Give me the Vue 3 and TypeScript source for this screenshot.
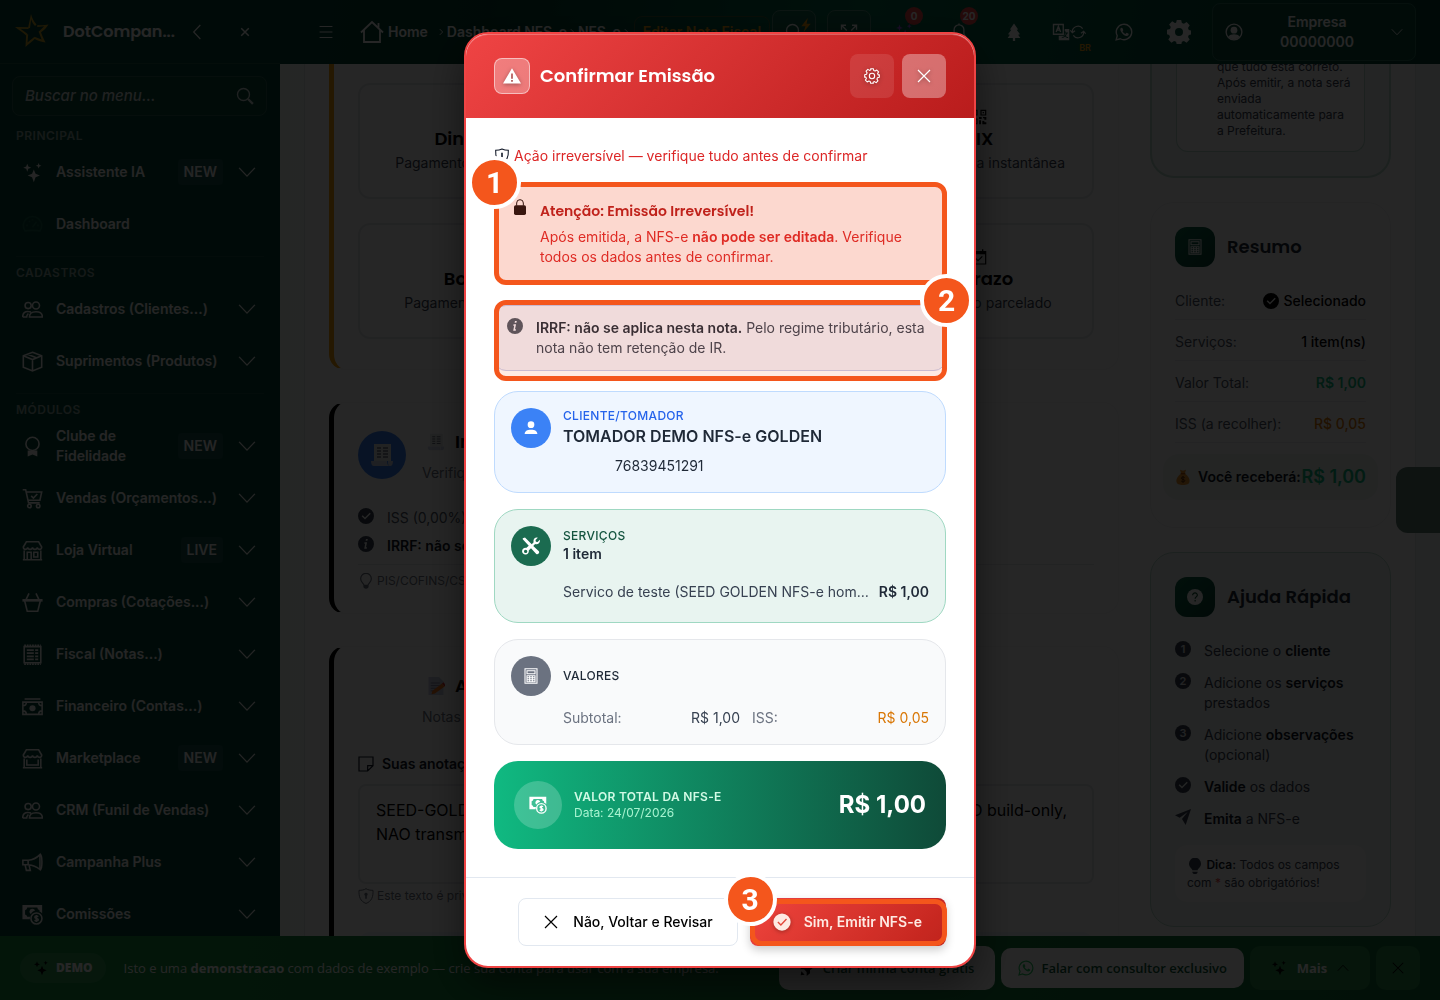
<script setup lang="ts">
import { ref } from 'vue'

interface MenuItem {
  label: string
  icon: string
  badge?: string
  leaf?: boolean
}
interface MenuSection {
  title: string
  items: MenuItem[]
}
interface PayOption {
  title: string
  text: string
  icon: string
  side: 'left' | 'right'
}
interface SummaryRow {
  label: string
  value: string
  tone?: string
  check?: boolean
}

const sections: MenuSection[] = [
  {
    title: 'PRINCIPAL',
    items: [
      { label: 'Assistente IA', icon: 'sparkles', badge: 'NEW' },
      { label: 'Dashboard', icon: 'gauge', leaf: true },
    ],
  },
  {
    title: 'CADASTROS',
    items: [
      { label: 'Cadastros (Clientes...)', icon: 'people' },
      { label: 'Suprimentos (Produtos)', icon: 'box' },
    ],
  },
  {
    title: 'MÓDULOS',
    items: [
      { label: 'Clube de Fidelidade', icon: 'medal', badge: 'NEW' },
      { label: 'Vendas (Orçamentos...)', icon: 'cart' },
      { label: 'Loja Virtual', icon: 'store', badge: 'LIVE' },
      { label: 'Compras (Cotações...)', icon: 'basket' },
      { label: 'Fiscal (Notas...)', icon: 'bill' },
      { label: 'Financeiro (Contas...)', icon: 'cash' },
      { label: 'Marketplace', icon: 'stall', badge: 'NEW' },
      { label: 'CRM (Funil de Vendas)', icon: 'people' },
      { label: 'Campanha Plus', icon: 'horn' },
      { label: 'Comissões', icon: 'coins' },
    ],
  },
]

const payOptions: PayOption[] = [
  { title: 'Dinheiro', text: 'Pagamento em espécie', icon: 'cash', side: 'left' },
  { title: 'PIX', text: 'Transferência instantânea', icon: 'qr', side: 'right' },
  { title: 'Boleto', text: 'Pagamento bancário', icon: 'bill', side: 'left' },
  { title: 'A Prazo', text: 'Pagamento parcelado', icon: 'calendar', side: 'right' },
]

const summary: SummaryRow[] = [
  { label: 'Cliente:', value: 'Selecionado', check: true },
  { label: 'Serviços:', value: '1 item(ns)' },
  { label: 'Valor Total:', value: 'R$ 1,00', tone: 'green' },
  { label: 'ISS (a recolher):', value: 'R$ 0,05', tone: 'amber' },
]

const search = ref('')
const notes = ref(
  'SEED-GOLDEN NFS-e homologacao tomador DEMO, servico unico teste, MODO build-only,\nNAO transmitir para a prefeitura.',
)
</script>

<template>
  <div class="app">
    <svg class="sprite" aria-hidden="true">
      <symbol id="sparkles" viewBox="0 0 24 24"><path fill="currentColor" d="M13.500 8.500l2 5 5 2-5 2-2 5.500-2-5.500-5-2 5-2zM6 2l1.200 3.200L10.500 6.500 7.200 7.800 6 11 4.800 7.800 1.500 6.500l3.300-1.300zM19 1l.9 2.300 2.300.9-2.300.9L19 7.500l-.9-2.400-2.300-.9 2.300-.9z"/></symbol>
      <symbol id="gauge" viewBox="0 0 24 24"><path class="ln" d="M3.500 19.500A10.500 10.500 0 1 1 20.500 19.500C18 18.500 6 18.500 3.500 19.500zM12 15l4.500-6M5 13h1.500M17.500 13H19M8 8l1 1M12 6v1.500"/></symbol>
      <symbol id="people" viewBox="0 0 24 24"><g class="ln"><circle cx="7" cy="7.500" r="3.500"/><circle cx="16" cy="7.500" r="4"/><path d="M8.500 20.500c0-4 3-6 7.500-6s7.300 2 7.300 6zM.800 20.500c0-4.500 2.500-6.500 6.500-6.300 1.200 0 2 .2 3 .7M.8 20.500h4.500c0-2 1-3 2-4"/></g></symbol>
      <symbol id="box" viewBox="0 0 24 24"><path class="ln" d="M12 1.500L22.500 5.500v13L12 22.700 1.500 18.500v-13zM1.500 5.500L12 9.800l10.500-4.300M12 9.800v12.900M6.500 3.600L17 8"/></symbol>
      <symbol id="medal" viewBox="0 0 24 24"><circle class="ln" cx="12" cy="9" r="7.500"/><path fill="currentColor" d="M6.500 16.500h11V23.500L12 21l-5.500 2.500z"/></symbol>
      <symbol id="cart" viewBox="0 0 24 24"><g class="ln"><path d="M.8 2h3.400l3.300 15h12.700M4.800 4.500h17.700l-2 9.500H7M10.500 9l2.500 2.500 4.500-4.700"/><circle cx="8.500" cy="20.500" r="2"/><circle cx="18.500" cy="20.500" r="2"/></g></symbol>
      <symbol id="store" viewBox="0 0 24 24"><path class="ln" d="M5 2h14l3.500 6c0 3.500-4.500 3.500-5 .5-.500 3-5 3-5.500 0-.5 3-5 3-5.500 0-.5 3-5 3-5-.5zM2.500 12v10.500M21.500 12v10.500M1 22.500h22M6 22.500V14h4.500v8.500M13.500 14H18v5.500h-4.500z"/></symbol>
      <symbol id="stall" viewBox="0 0 24 24"><path class="ln" d="M5 2h14l3.500 6c0 3.500-4.500 3.500-5 .5-.500 3-5 3-5.500 0-.5 3-5 3-5.500 0-.5 3-5 3-5-.5zM2.500 12v10.500M21.500 12v10.500M1 22.500h22M5.500 13v6.500h13V13"/></symbol>
      <symbol id="basket" viewBox="0 0 24 24"><path class="ln" d="M3 10l3 12h12l3-12M8 1.500L4.500 9M16 1.500L19.500 9"/><path stroke="currentColor" stroke-width="3" d="M.5 9.500h23"/></symbol>
      <symbol id="bill" viewBox="0 0 24 24"><path class="ln" d="M2.500 3h19v18.500h-19z"/><path class="ln" stroke-dasharray="2 1" d="M2.500 1.500h19M2.500 23h19"/><path stroke="currentColor" stroke-width="2" d="M5.500 7h8M15 7h3.500M5.500 10.500h8M15 10.500h3.500M5.500 14h8M15 14h3.500M5.500 17.500h8M15 17.500h3.500"/></symbol>
      <symbol id="cash" viewBox="0 0 24 24"><path class="ln" d="M1 7h22v14H1zM3 3.500h18M1 11c2.500 0 4-1.500 4-4M23 11c-2.500 0-4-1.500-4-4M1 17c2.500 0 4 1.500 4 4M23 17c-2.500 0-4 1.500-4 4"/><circle cx="12" cy="14" r="3.500" fill="currentColor"/></symbol>
      <symbol id="horn" viewBox="0 0 24 24"><path class="ln" d="M1 9.500h6C13 9 17 6.500 20.500 3v17C17 17 13 15 7 14.500H1zM7 9.500v5M3.500 14.500l1.500 6.500h4.500l-1.500-6.300M20.500 2.500c3 0 3 18 0 18"/></symbol>
      <symbol id="coins" viewBox="0 0 24 24"><path fill="currentColor" fill-rule="evenodd" d="M.5 1h22.500v9.800a7.500 7.500 0 0 0-3-2.200V7a3 3 0 0 1-2.500-3H6a3.500 3.500 0 0 1-2.500 3v5A3.500 3.500 0 0 1 6 14.500h3.300c-.3 1-.4 2-.3 3H.5zM8.500 8.500a3.400 3.400 0 0 1 6.500-1c-2 .500-3.800 1.800-4.800 3.800-1-.6-1.700-1.600-1.700-2.800z"/><circle class="ln" cx="16.500" cy="16.500" r="6.300"/><path class="ln" d="M18.500 14.500c-1-1.200-3.800-1-3.800.6 0 2 3.900.8 3.900 2.800 0 1.600-3 1.800-4.200.5M16.500 12.500v8"/></symbol>
      <symbol id="chev-down" viewBox="0 0 24 24"><path class="ln" d="M1.500 6.500L12 17.500 22.500 6.500"/></symbol>
      <symbol id="chev-left" viewBox="0 0 24 24"><path class="ln" d="M17 1.500L7 12l10 10.500"/></symbol>
      <symbol id="chev-right" viewBox="0 0 24 24"><path fill="none" stroke="currentColor" stroke-width="3" d="M6 2l10 10L6 22"/></symbol>
      <symbol id="cross" viewBox="0 0 24 24"><path class="ln" d="M3 3l18 18M21 3L3 21"/></symbol>
      <symbol id="cross-bold" viewBox="0 0 24 24"><path fill="none" stroke="currentColor" stroke-width="3.500" d="M3 3l18 18M21 3L3 21"/></symbol>
      <symbol id="lens" viewBox="0 0 24 24"><circle class="ln" cx="10" cy="10" r="8"/><path stroke="currentColor" stroke-width="3" d="M16 16l6.500 6.500"/></symbol>
      <symbol id="burger" viewBox="0 0 24 24"><path class="ln" d="M1 2.500h22M1 12h22M1 21.500h22"/></symbol>
      <symbol id="house" viewBox="0 0 24 24"><path class="ln" d="M1 12.500L12 2l11 10.500M4 10v12h16V10M18.500 8V3"/></symbol>
      <symbol id="expand" viewBox="0 0 24 24"><path class="ln" d="M2 9V3h6M2 3l7 7M22 9V3h-6M22 3l-7 7M2 15v6h6M2 21l7-7M22 15v6h-6M22 21l-7-7"/></symbol>
      <symbol id="bell" viewBox="0 0 24 24"><path class="ln" d="M3 18.500h18l-2.500-4V9a6.500 6.500 0 0 0-13 0v5.500zM12 2.500V.5M9.500 21.500h5"/></symbol>
      <symbol id="tree" viewBox="0 0 24 24"><path fill="currentColor" d="M12 .5l5.500 8-2 .5 4.500 6-2.500.5 3 4.500h-7v4h-3v-4h-7l3-4.500L4 15l4.500-6-2-.5z"/></symbol>
      <symbol id="translate" viewBox="0 0 24 24"><path class="ln" d="M2 2h13v13H2zM5.500 12l3-7.500 3 7.500M6.500 9.500h4"/><path fill="currentColor" fill-rule="evenodd" d="M17 8h6v15H9v-6h8zM13 18.500v1.300c2 .2 3.500-.7 4.500-1.800 1 1.300 2 2 4 2v-1.300c-1.500 0-2.300-.5-3-1.500.8-1 1.200-2 1.500-3.200h1.500V12.700H18V11h-1v3h1.500c-.8 2.800-2.500 4.500-5.500 4.500z"/></symbol>
      <symbol id="sync" viewBox="0 0 24 24"><path class="ln" d="M3.500 12a8.500 8.500 0 0 1 15.500-5M20.500 12A8.500 8.500 0 0 1 5 17M.500 9.500l3 3.500 4-3M23.500 14.500l-3-3.500-4 3"/></symbol>
      <symbol id="whats" viewBox="0 0 24 24"><path class="ln" d="M1.500 22.500L3 17a10.300 10.300 0 1 1 4 4z"/><path fill="currentColor" d="M8.300 6.300c-1.800 1-1.700 3.500.2 6 2 2.800 4.600 4.900 7 4.900 2 0 3.200-1.700 2.700-2.900l-2.700-1.400-1.500 1.600c-1.700-.6-3.200-2-4-3.600l1.100-1.400-1.200-3z"/></symbol>
      <symbol id="gear-solid" viewBox="0 0 24 24"><path fill="currentColor" fill-rule="evenodd" d="M9.800 0h4.400l.7 3 2 .8 2.700-1.700 3.100 3.100-1.700 2.700.8 2 3 .7v3.600l-3 .7-.8 2 1.700 2.700-3.100 3.100-2.700-1.700-2 .8-.7 3H9.800l-.7-3-2-.8-2.700 1.700-3.100-3.100L3 16.900l-.8-2-2.200-.7V9.800l3-.7.800-2L2.100 4.400l3.100-3.100L7.900 3l1.200-.3zM12 8a4 4 0 1 0 0 8 4 4 0 0 0 0-8z"/></symbol>
      <symbol id="gear-line" viewBox="0 0 24 24"><path fill="none" stroke="currentColor" stroke-width="1.600" stroke-linejoin="round" d="M10 1h4l.7 2.800 2 .8 2.500-1.500 2.700 2.700-1.500 2.500.8 2L23 10v4l-2.800.7-.8 2 1.500 2.500-2.700 2.700-2.500-1.500-2 .8L14 23h-4l-.7-2.800-2-.8-2.500 1.500-2.700-2.700 1.500-2.500-.8-2L1 14v-4l2.800-.7.8-2-1.500-2.500 2.700-2.700 2.500 1.500 2-.8z"/><circle fill="none" stroke="currentColor" stroke-width="1.600" cx="12" cy="12" r="4"/></symbol>
      <symbol id="user-ring" viewBox="0 0 24 24"><circle class="ln" cx="12" cy="12" r="10.500"/><circle cx="12" cy="9.500" r="4.500" fill="currentColor"/><path fill="currentColor" d="M4.500 18c3-4 12-4 15 0-3 5-12 5-15 0z"/></symbol>
      <symbol id="user" viewBox="0 0 24 24"><circle cx="12" cy="7" r="5" fill="currentColor"/><path fill="currentColor" d="M2.500 21c0-4.500 3.500-6.500 9.500-6.500s9.500 2 9.500 6.500z"/></symbol>
      <symbol id="warn" viewBox="0 0 24 24"><path fill="currentColor" fill-rule="evenodd" d="M12 1.500L24 22H0zM10.800 8.500v7h2.400v-7zM10.800 17.300v2.200h2.400v-2.200z"/></symbol>
      <symbol id="lock" viewBox="0 0 24 24"><rect x="3" y="9.500" width="18" height="14.500" rx="2.500" fill="currentColor"/><path fill="none" stroke="currentColor" stroke-width="1.500" d="M7 10V6a5 5 0 0 1 10 0v4"/></symbol>
      <symbol id="shield" viewBox="0 0 24 24"><path fill="none" stroke="currentColor" stroke-width="1.500" d="M12 1c3 2 6.500 2.500 10.500 2.500C23 13 20.500 20 12 23.200 3.500 20 1 13 1.500 3.500 5.500 3.500 9 3 12 1z"/><path fill="currentColor" d="M12 7a2.500 2.500 0 0 1 1.200 4.700V16h-2.400v-4.300A2.500 2.500 0 0 1 12 7z"/></symbol>
      <symbol id="shield-alert" viewBox="0 0 24 24"><path fill="none" stroke="currentColor" stroke-width="1.600" d="M12 1.500c3 1.500 6.500 2 9.500 2C22 13 20 19.500 12 23 4 19.500 2 13 2.500 3.500c3 0 6.500-.5 9.500-2z"/><path stroke="currentColor" stroke-width="2.400" d="M12 7v7M12 16v2.400"/></symbol>
      <symbol id="info" viewBox="0 0 24 24"><path fill="currentColor" fill-rule="evenodd" d="M12 0a12 12 0 1 0 0 24 12 12 0 0 0 0-24zM12 4.500h2.700l-.6 2.800h-2.700zM9.800 9.500h3.800l-1.600 7.500h1.500l-.4 2H9.300l1.500-7.500H9.400z"/></symbol>
      <symbol id="check" viewBox="0 0 24 24"><path fill="currentColor" fill-rule="evenodd" d="M12 0a12 12 0 1 0 0 24 12 12 0 0 0 0-24zM17.600 7l1.500 1.500-8.600 8.700-5-5L7 10.700l3.500 3.500z"/></symbol>
      <symbol id="tick" viewBox="0 0 24 24"><circle cx="12" cy="12" r="11.500" fill="currentColor"/><path fill="none" stroke="#e0463f" stroke-width="1.800" d="M6.500 12l4 4 7.500-8"/></symbol>
      <symbol id="tools" viewBox="0 0 24 24"><path fill="currentColor" fill-rule="evenodd" d="M1 1.500L4 .5l9 9 2.500-2.500C14.500 3.500 17 0 21 1l-3 3 .5 2.200 2.300.5 3-3c1 4-2.500 6.800-6.300 5.600L15 12l7.500 7c1.500 2.500-1.500 5-3.500 3.500l-7-7.500-3 3a4.500 4.500 0 1 1-3.500-3.500l3.500-3-8-8.500zM4.800 17a2.200 2.200 0 1 0 .1 4.400 2.200 2.200 0 0 0-.1-4.400z"/></symbol>
      <symbol id="calc" viewBox="0 0 24 24"><path fill="none" stroke="currentColor" stroke-width="1.600" d="M3 1h18v22H3zM6 4h12v4.500H6zM6 11.500h12v9H6zM6 14.500h12M6 17.500h12M10 11.500v9M14 11.500v9"/></symbol>
      <symbol id="bulb" viewBox="0 0 24 24"><path class="ln" d="M9 18.500c0-3-5-4.500-5-10a8 8 0 0 1 16 0c0 5.500-5 7-5 10z"/><path fill="currentColor" d="M8 19.500h8c0 3-1.500 4-4 4s-4-1-4-4z"/></symbol>
      <symbol id="bulb-solid" viewBox="0 0 24 24"><path fill="currentColor" d="M8 18.500c0-3-5-4.500-5-10a9 9 0 0 1 18 0c0 5.500-5 7-5 10zM8 20.500h8c0 2.500-1.500 3.500-4 3.500s-4-1-4-3.500z"/></symbol>
      <symbol id="qr" viewBox="0 0 24 24"><path class="ln" d="M2 2h7v7H2zM15 2h7v7h-7zM2 15h7v7H2z"/><path fill="currentColor" d="M4.500 4.500h2v2h-2zM17.500 4.500h2v2h-2zM12 12h4v3h-4zM18 12h5v4h-3v-2h-2zM12 17h3v6h-3zM17 18h3v2h3v3h-6z"/></symbol>
      <symbol id="calendar" viewBox="0 0 24 24"><path class="ln" d="M2 4h20v18.500H2zM7 14l3.500 3.500L17 11"/><path fill="currentColor" d="M2 3h20v5H2zM5.500.5h2v4h-2zM16.500.5h2v4h-2z"/></symbol>
      <symbol id="note" viewBox="0 0 24 24"><path class="ln" d="M1.500 1.500h21v13l-8 8h-13zM22.500 14.500h-8v8"/></symbol>
      <symbol id="plane" viewBox="0 0 24 24"><path fill="currentColor" d="M24 0L0 9.500l7 3.700L19 4.500 10.500 15 16 24z"/></symbol>
      <symbol id="question" viewBox="0 0 24 24"><circle cx="12" cy="12" r="12" fill="currentColor"/><path fill="none" stroke="#0f5132" stroke-width="1.800" d="M8.500 9.500c0-5 7.300-4.500 7 0-.2 2.300-3.300 2.500-3.300 5M12.200 16.500v2.200"/></symbol>
      <symbol id="scroll" viewBox="0 0 24 24"><path fill="#e5e7eb" d="M4 1h17v17H4z"/><path fill="#cfd4e8" d="M1 18h16c0 3 1 5 3 5H4c-2 0-3-2-3-5zM18 18h5c0 3-1 5-3 5s-2-3-2-5z"/><path stroke="#6b7280" stroke-width="1.500" d="M7 5h4M13 5h5M7 8h4M13 8h5M7 11h4M13 11h5M7 14h4M13 14h5"/></symbol>
      <symbol id="memo" viewBox="0 0 24 24"><path fill="#c7cbe0" d="M2 0h14l6 6v18H2z"/><path stroke="#7b81a0" stroke-width="1.300" d="M5 8h12M5 11.500h12M5 15h9M5 18.500h5"/><path fill="#f97316" d="M7 18.500L20 8.500l3.500 4-13 9.500-4.500 1z"/><path fill="#dc2626" d="M20 8.500l2-1.500 3 4-1.500 1.500z"/></symbol>
      <symbol id="moneybag" viewBox="0 0 24 24"><path fill="#e8912d" d="M7.500 1l4.500 1.500L16.500 1l-1.800 6C20 10 23 16 21.500 20c-1 3-3.500 4-9.500 4s-8.500-1-9.500-4C1 16 4 10 9.300 7z"/><path stroke="#b45309" stroke-width="2" d="M8.500 7h7"/><path fill="none" stroke="#5f2f0a" stroke-width="1.500" d="M14.500 13c-1-1.500-5-1.300-5 .8 0 2.500 5.200 1.200 5.200 3.700 0 2.200-4 2.300-5.400.5M12 10.500v10"/></symbol>
      <symbol id="rocket" viewBox="0 0 24 24"><path fill="currentColor" d="M23 1c-7 0-11 3-14 8H4l-4 5h6l4 4v6l5-4v-5c5-3 8-7 8-14zM2 17l5 5-6 1z"/></symbol>
      <symbol id="bolt" viewBox="0 0 24 24"><path fill="#f59e0b" d="M15 0L4 14h7l-3 10 12-14h-7z"/></symbol>
      <symbol id="star" viewBox="0 0 36 36"><path fill="#c9a227" d="M17 0c1 4 3 7.500 5.500 10.500l-1.500 1.500C18.500 9 17.500 7 17.200 5L16 14l-2 .2zM1 13l14 .2-.6 1.800-8-.3 7 5-1.200 1.800C9 18.500 5 16 1 13zM11.500 33l.7-13 2 .4-.7 8 7-5.700 1 1.500C18 27.500 14 30.500 11.500 33zM31.500 28.500c-3.500-.5-7.500-1.500-11-3.800l.6-1.700 6.500 2.500-3-8 1.900-.9c1 4 3 8 5 11.900zM34.500 10.500c-2 3-4.500 6-7.800 8l-1.500-1.300 5-5-7 .8.2-2c3.500.4 7.500.4 11.100-.5z"/></symbol>
    </svg>

    <div class="workspace">
      <aside class="sidebar">
        <header class="brand">
          <svg class="logo"><use href="#star" /></svg>
          <span class="brand-name">DotCompan...</span>
          <button class="plain" type="button" aria-label="Recolher menu"><svg class="i16"><use href="#chev-left" /></svg></button>
          <button class="plain close-menu" type="button" aria-label="Fechar menu"><svg class="i10"><use href="#cross-bold" /></svg></button>
        </header>
        <label class="search">
          <input v-model="search" type="search" placeholder="Buscar no menu..." aria-label="Buscar no menu" />
          <svg class="i18"><use href="#lens" /></svg>
        </label>
        <nav>
          <section v-for="s in sections" :key="s.title" class="menu-section">
            <h2>{{ s.title }}</h2>
            <a v-for="m in s.items" :key="m.label" href="#" class="menu-item" :class="{ faded: m.leaf }">
              <svg class="menu-icon"><use :href="'#' + m.icon" /></svg>
              <span class="menu-label">{{ m.label }}</span>
              <span v-if="m.badge" class="tag">{{ m.badge }}</span>
              <svg v-if="!m.leaf" class="i18"><use href="#chev-down" /></svg>
            </a>
          </section>
        </nav>
      </aside>

      <div class="main">
        <header class="topbar">
          <button class="plain burger" type="button" aria-label="Menu"><svg class="i14"><use href="#burger" /></svg></button>
          <nav class="crumbs" aria-label="Trilha">
            <svg class="i24 home"><use href="#house" /></svg>
            <a href="#">Home</a>
            <svg class="sep first-sep"><use href="#chev-right" /></svg>
            <a href="#">Dashboard NFS-e</a>
            <svg class="sep"><use href="#chev-right" /></svg>
            <a href="#">NFS-e</a>
            <svg class="sep"><use href="#chev-right" /></svg>
            <span class="here">Editar Nota Fiscal</span>
          </nav>
          <div class="tools">
            <button class="tool boxed" type="button" aria-label="Buscar"><svg class="i18"><use href="#lens" /></svg><svg class="bolt"><use href="#bolt" /></svg></button>
            <button class="tool boxed" type="button" aria-label="Tela cheia"><svg class="i18"><use href="#expand" /></svg></button>
            <button class="tool purple" type="button" aria-label="Assistente"><svg class="i18"><use href="#sparkles" /></svg><span class="count">0</span></button>
            <button class="tool" type="button" aria-label="Notificações"><svg class="i18"><use href="#bell" /></svg><span class="count">20</span></button>
            <button class="tool" type="button" aria-label="Tema"><svg class="i18"><use href="#tree" /></svg></button>
            <button class="tool" type="button" aria-label="Idioma"><svg class="i18"><use href="#translate" /></svg><svg class="i16"><use href="#sync" /></svg><span class="lang">BR</span></button>
            <button class="tool" type="button" aria-label="WhatsApp"><svg class="i18"><use href="#whats" /></svg></button>
            <button class="tool" type="button" aria-label="Configurações"><svg class="i24"><use href="#gear-solid" /></svg></button>
            <button class="company" type="button">
              <svg class="i18"><use href="#user-ring" /></svg>
              <span>Empresa<br />00000000</span>
              <svg class="i12"><use href="#chev-down" /></svg>
            </button>
          </div>
        </header>

        <main class="content">
          <div class="page">
            <div class="forms">
              <section class="card amber-card">
                <div class="options">
                  <button v-for="o in payOptions" :key="o.title" type="button" class="option" :class="o.side">
                    <svg class="i16"><use :href="'#' + o.icon" /></svg>
                    <strong>{{ o.title }}</strong>
                    <span>{{ o.text }}</span>
                  </button>
                </div>
              </section>

              <section class="card">
                <header class="card-head">
                  <span class="disc"><svg class="i24"><use href="#scroll" /></svg></span>
                  <div>
                    <h3><svg class="i18"><use href="#scroll" /></svg>Impostos</h3>
                    <p>Verifique os impostos</p>
                  </div>
                </header>
                <ul class="taxes">
                  <li><svg class="i16"><use href="#check" /></svg>ISS (0,00%)</li>
                  <li class="strong"><svg class="i16"><use href="#info" /></svg>IRRF: não se aplica</li>
                </ul>
                <p class="hint ruled"><svg class="i16"><use href="#bulb" /></svg>PIS/COFINS/CSLL</p>
              </section>

              <section class="card">
                <header class="card-head">
                  <span class="disc empty"></span>
                  <div>
                    <h3><svg class="i18"><use href="#memo" /></svg>Anotações</h3>
                    <p>Notas internas</p>
                  </div>
                </header>
                <label class="notes-label" for="notes"><svg class="i16"><use href="#note" /></svg>Suas anotações</label>
                <textarea id="notes" v-model="notes"></textarea>
                <p class="hint"><svg class="i16"><use href="#shield" /></svg>Este texto é privado</p>
                <div class="next-box"></div>
              </section>
            </div>

            <aside class="rail">
              <section class="side-card tinted review">
                <p>que tudo está correto. Após emitir, a nota será enviada automaticamente para a Prefeitura.</p>
              </section>

              <section class="side-card">
                <h3><span class="tile"><svg class="i16"><use href="#calc" /></svg></span>Resumo</h3>
                <dl class="summary">
                  <div v-for="r in summary" :key="r.label">
                    <dt>{{ r.label }}</dt>
                    <dd :class="r.tone"><svg v-if="r.check" class="i16"><use href="#check" /></svg>{{ r.value }}</dd>
                  </div>
                </dl>
                <p class="receive"><svg class="i16"><use href="#moneybag" /></svg><strong>Você receberá:</strong><b>R$ 1,00</b></p>
              </section>

              <section class="side-card tinted help">
                <h3><span class="tile"><svg class="i16"><use href="#question" /></svg></span>Ajuda Rápida</h3>
                <ul>
                  <li><i class="num">1</i><span>Selecione o <b>cliente</b></span></li>
                  <li><i class="num">2</i><span>Adicione os <b>serviços</b> prestados</span></li>
                  <li><i class="num">3</i><span>Adicione <b>observações</b> (opcional)</span></li>
                  <li><svg class="i16"><use href="#check" /></svg><span><b>Valide</b> os dados</span></li>
                  <li><svg class="i16"><use href="#plane" /></svg><span><b>Emita</b> a NFS-e</span></li>
                </ul>
                <p class="tip"><svg class="i16"><use href="#bulb-solid" /></svg> <b>Dica:</b> Todos os campos com <em>*</em> são obrigatórios!</p>
              </section>
            </aside>
          </div>
        </main>
      </div>
    </div>

    <footer class="demo-bar">
      <span class="demo-pill"><svg class="i16"><use href="#sparkles" /></svg>DEMO</span>
      <p>Isto e uma <b>demonstracao</b> com dados de exemplo — crie sua conta para usar com a sua empresa.</p>
      <div class="demo-actions">
        <button type="button" class="white tall"><svg class="i16 black"><use href="#rocket" /></svg>Criar minha conta grátis</button>
        <button type="button" class="white"><svg class="i16 wgreen"><use href="#whats" /></svg>Falar com consultor exclusivo</button>
        <button type="button" class="glass more"><svg class="i16 black"><use href="#sparkles" /></svg>Mais<svg class="i12 black flip"><use href="#chev-down" /></svg></button>
        <button type="button" class="glass square" aria-label="Fechar aviso"><svg class="i14 black"><use href="#cross" /></svg></button>
      </div>
    </footer>

    <button class="float-tab" type="button" aria-label="Abrir painel"></button>

    <div class="overlay">
      <div class="modal" role="dialog" aria-modal="true" aria-labelledby="modal-title">
        <header class="modal-head">
          <span class="modal-icon"><svg class="i18"><use href="#warn" /></svg></span>
          <h2 id="modal-title">Confirmar Emissão</h2>
          <button type="button" class="head-btn" aria-label="Opções"><svg class="i16"><use href="#gear-line" /></svg></button>
          <button type="button" class="head-btn bright" aria-label="Fechar"><svg class="i16"><use href="#cross" /></svg></button>
        </header>

        <div class="modal-body">
          <p class="lead"><svg class="i16"><use href="#shield-alert" /></svg>Ação irreversível — verifique tudo antes de confirmar</p>

          <div class="marked first">
            <div class="alert danger">
              <svg class="i16"><use href="#lock" /></svg>
              <div>
                <h3>Atenção: Emissão Irreversível!</h3>
                <p>Após emitida, a NFS-e <b>não pode ser editada</b>. Verifique todos os dados antes de confirmar.</p>
              </div>
            </div>
            <div class="marker"><span class="step start">1</span></div>
          </div>

          <div class="marked second">
            <div class="alert neutral">
              <svg class="i16"><use href="#info" /></svg>
              <p><b>IRRF: não se aplica nesta nota.</b> Pelo regime tributário, esta nota não tem retenção de IR.</p>
            </div>
            <div class="marker"><span class="step end">2</span></div>
          </div>

          <section class="box blue">
            <span class="avatar"><svg class="i16"><use href="#user" /></svg></span>
            <div class="box-main">
              <h4>CLIENTE/TOMADOR</h4>
              <strong class="client">TOMADOR DEMO NFS-e GOLDEN</strong>
              <p class="document">76839451291</p>
            </div>
          </section>

          <section class="box green">
            <span class="avatar"><svg class="i18"><use href="#tools" /></svg></span>
            <div class="box-main">
              <h4>SERVIÇOS</h4>
              <strong class="qty">1 item</strong>
              <p class="line"><span>Servico de teste (SEED GOLDEN NFS-e homologacao)</span><b>R$ 1,00</b></p>
            </div>
          </section>

          <section class="box gray">
            <span class="avatar"><svg class="i16"><use href="#calc" /></svg></span>
            <div class="box-main">
              <h4>VALORES</h4>
              <dl class="values">
                <div><dt>Subtotal:</dt><dd>R$ 1,00</dd></div>
                <div><dt>ISS:</dt><dd class="iss">R$ 0,05</dd></div>
              </dl>
            </div>
          </section>

          <section class="total">
            <span class="avatar"><svg class="i18"><use href="#coins" /></svg></span>
            <div class="total-text">
              <h4>VALOR TOTAL DA NFS-E</h4>
              <p>Data: 24/07/2026</p>
            </div>
            <strong>R$ 1,00</strong>
          </section>
        </div>

        <footer class="modal-foot">
          <button type="button" class="cancel"><svg class="i16"><use href="#cross" /></svg>Não, Voltar e Revisar</button>
          <div class="marked third">
            <button type="button" class="submit"><svg class="i18"><use href="#tick" /></svg>Sim, Emitir NFS-e</button>
            <div class="marker"><span class="step start">3</span></div>
          </div>
        </footer>
      </div>
    </div>
  </div>
</template>

<style>
body { margin: 0; }
.ln { fill: none; stroke: currentColor; stroke-width: 1.8; }
</style>

<style scoped>
* { box-sizing: border-box; }
h2, h3, h4, p, ul, dl, dd { margin: 0; padding: 0; }
ul { list-style: none; }
a { color: inherit; text-decoration: none; }
button { font: inherit; color: inherit; border: 0; background: none; padding: 0; cursor: pointer; }
svg { flex: none; }
b { font-weight: 600; }
.sprite { position: absolute; width: 0; height: 0; }
.i10 { width: 10px; height: 10px; }
.i12 { width: 12px; height: 12px; }
.i14 { width: 14px; height: 14px; }
.i16 { width: 16px; height: 16px; }
.i18 { width: 18px; height: 18px; }
.i24 { width: 24px; height: 24px; }

.app {
  height: 100vh;
  display: flex;
  flex-direction: column;
  overflow: hidden;
  font: 400 14px/20px Inter, "Liberation Sans", sans-serif;
  color: #111827;
  background: #fff;
}
.workspace { flex: 1; min-height: 0; display: flex; }

/* Sidebar */
.sidebar { flex: none; width: 280px; overflow: hidden; background: #064737; color: #fff; }
.brand { height: 64px; display: flex; align-items: center; padding: 0 14px; border-bottom: 1px solid #1d5748; }
.logo { width: 36px; height: 36px; }
.brand-name { width: 126px; margin-left: 13px; font: 600 16px/24px Poppins, Inter, sans-serif; white-space: nowrap; }
.plain { display: grid; place-items: center; }
.close-menu { margin-left: 35px; }
.search { margin: 12px 13px 11px 12px; height: 40px; display: flex; align-items: center; padding: 0 12px; border: 1px solid #2c6151; border-radius: 8px; background: #0a4a3b; }
.search input { flex: 1; min-width: 0; border: 0; outline: 0; background: none; font: italic 500 15px/20px Inter, sans-serif; color: #fff; padding: 0; }
.search input::placeholder { color: #d3dedb; }
.search svg { color: #d3dedb; }
.menu-section h2 { font-size: 12px; line-height: 16px; font-weight: 600; letter-spacing: .5px; color: #8ba79e; padding: 1px 0 2px; margin: 0 16px; }
.menu-section + .menu-section h2 { margin-top: 6px; padding-top: 8px; border-top: 1px solid #1a5545; }
.menu-item { height: 52px; display: flex; align-items: center; padding: 0 24px 0 22px; font-weight: 600; color: #f3f7f5; }
.menu-icon { width: 21px; height: 21px; }
.faded .menu-icon { color: #14604c; }
.menu-label { flex: 1; margin: 0 13px; }
.tag { padding: 3px 6px; margin-right: 15px; border-radius: 4px; background: #15504c; }

/* Top bar */
.main { flex: 1; min-width: 0; display: flex; flex-direction: column; }
.topbar { flex: none; height: 64px; display: flex; align-items: center; padding: 0 24px 0 39px; color: #fff; background: linear-gradient(100deg, #064737 0%, #04412f 18%, #046b4d 50%, #04543e 75%, #043d2e 100%); }
.crumbs { display: flex; align-items: center; gap: 2px; margin-left: 27px; font-size: 14px; font-weight: 600; white-space: nowrap; }
.home { margin-right: 2px; }
.sep { width: 7px; height: 10px; }
.first-sep { margin-left: 8px; }
.here { margin-left: 2px; padding: 5px 8px; border-radius: 8px; border: 1px solid #3f5a33; color: #f59e0b; }
.tools { flex: none; margin-left: auto; display: flex; align-items: center; gap: 11px; }
.tool { position: relative; width: 44px; height: 44px; display: flex; align-items: center; justify-content: center; border-radius: 8px; }
.boxed { border: 1px solid #4f8a78; background: #11634b; }
.purple { color: #a855f7; }
.bolt { position: absolute; width: 14px; height: 14px; right: 2px; top: 7px; }
.count { position: absolute; right: 3px; top: -3px; min-width: 18px; height: 18px; border-radius: 9px; background: #ef4444; color: #fff; font: 700 10px/18px Inter, sans-serif; text-align: center; }
.lang { position: absolute; right: 0; bottom: 1px; font: 600 9px/10px Inter, sans-serif; color: #f59e0b; }
.company { width: 204px; height: 58px; display: flex; align-items: center; justify-content: space-between; padding: 0 12px; border: 1px solid #2b6f5b; border-radius: 8px; background: #0a4d3b; font-weight: 600; text-align: center; }

/* Page */
.content { flex: 1; min-height: 0; overflow: hidden; padding: 0 24px; background: linear-gradient(90deg, #f8faf9, #fff 30%, #fff 70%, #eef7f3); }
.page { display: grid; grid-template-columns: minmax(0, 1fr) 241px; gap: 31px; align-items: start; padding: 0 24px; min-height: 100%; border: solid #e3ebe8; border-width: 0 1px; background: #fff; }
.forms { display: flex; flex-direction: column; gap: 32px; }
.card { padding: 28px 24px 24px; border: 1px solid #f3f4f6; border-left: 5px solid #000; border-radius: 16px; }
.amber-card { padding-top: 19px; padding-bottom: 30px; border-top: 0; border-left-color: #f59e0b; border-radius: 0 0 16px 16px; }
.options { display: grid; grid-template-columns: repeat(3, 1fr); gap: 24px; }
.option { height: 116px; display: flex; flex-direction: column; align-items: center; justify-content: center; border: 2px solid #e5e7eb; border-radius: 12px; color: #000; }
.option.left { grid-column: 1; }
.option.right { grid-column: 3; }
.option strong { margin: 2px 0 2px; font: 600 18px/24px Poppins, Inter, sans-serif; }
.option span { color: #374151; }
.card-head { display: flex; gap: 16px; align-items: flex-start; margin-bottom: 25px; }
.disc { width: 48px; height: 48px; display: grid; place-items: center; border-radius: 50%; background: #3b82f6; }
.disc.empty { background: none; }
.card-head h3 { display: flex; align-items: center; gap: 10px; padding-left: 5px; font: 600 18px/22px Poppins, Inter, sans-serif; color: #000; }
.card-head p { margin-top: 10px; color: #6b7280; }
.taxes { display: grid; gap: 8px; margin-bottom: 8px; color: #4b5563; }
.taxes li { display: flex; gap: 13px; align-items: flex-start; }
.taxes svg { color: #374151; }
.taxes .strong { font-weight: 600; color: #111827; }
.hint { display: flex; align-items: center; gap: 3px; font-size: 12px; line-height: 16px; color: #6b7280; }
.ruled { padding-top: 8px; border-top: 1px solid #e5e7eb; }
.notes-label { display: flex; align-items: center; gap: 8px; margin-top: 27px; font-weight: 600; }
textarea { display: block; width: 100%; height: 100px; margin: 10px 0 4px; padding: 12px 16px; border: 2px solid #e5e7eb; border-radius: 8px; resize: none; overflow: hidden; background: none; font: 400 16px/24px Inter, sans-serif; color: #000; }
.next-box { height: 60px; margin-top: 28px; border-radius: 12px; background: #eff6ff; }

/* Right rail */
.rail { display: flex; flex-direction: column; gap: 24px; }
.side-card { border: 1px solid #eef0f2; border-radius: 24px; padding: 24px; }
.tinted { background: #f0f5f3; border-color: #b9dccf; }
.review { margin-top: -30px; border-width: 2px; border-top: 0; padding: 25px 24px 24px; border-radius: 0 0 24px 24px; }
.review p { padding: 0 12px 12px 40px; border: 1px solid #b9dccf; border-top: 0; border-radius: 0 0 12px 12px; background: #fafcfb; font-size: 12px; line-height: 16px; color: #374151; }
.side-card h3 { display: flex; align-items: center; gap: 12px; font: 600 18px/24px Poppins, Inter, sans-serif; color: #1f2937; white-space: nowrap; }
.tile { flex: none; width: 40px; height: 40px; display: grid; place-items: center; border-radius: 12px; color: #fff; background: linear-gradient(135deg, #0f6b4c, #064233); }
.summary { margin-top: 12px; }
.summary div { display: flex; justify-content: space-between; padding: 12px 0 8px; border-bottom: 1px solid #e9ebee; }
.summary dt { color: #4b5563; }
.summary dd { display: flex; align-items: center; gap: 4px; font-weight: 500; color: #000; background: none; border: 0; }
.summary .green { color: #10b981; font-weight: 600; }
.summary .amber { color: #d97706; font-weight: 500; }
.receive { display: flex; align-items: center; margin: 11px -12px 3px; padding: 11px 12px; border-radius: 16px; background: #edf5f2; white-space: nowrap; line-height: 24px; }
.receive strong { flex: 1; margin-left: 7px; font-weight: 600; }
.receive b { font-size: 18px; color: #10b981; }
.help ul { display: grid; gap: 12px; margin: 24px 0 16px; color: #374151; }
.help li { display: flex; gap: 13px; }
.help b { color: #111827; }
.num { flex: none; width: 16px; height: 16px; border-radius: 50%; background: #374151; color: #e5e7eb; text-align: center; font: 600 11px/16px Inter, sans-serif; }
.tip { padding: 11px 12px; border-radius: 12px; background: #fafcfb; font-size: 12px; line-height: 17px; color: #374151; }
.tip svg { vertical-align: middle; }
.tip em { color: #ef4444; font-style: normal; }

/* Demo bar */
.demo-bar { flex: none; height: 64px; display: flex; align-items: center; padding: 0 20px; color: #fff; background: linear-gradient(90deg, #15903f, #126d35); font: 600 13px/18px "Open Sans", "Noto Sans", sans-serif; white-space: nowrap; }
.demo-pill { display: flex; align-items: center; gap: 7px; height: 30px; padding: 0 13px; border-radius: 15px; background: #2f9a55; font-size: 12px; font-weight: 800; }
.demo-pill svg, .black { color: #000; }
.demo-bar p { margin-left: 18px; font-weight: 500; }
.demo-bar p b { font-weight: 700; }
.demo-actions { display: flex; align-items: center; gap: 6px; margin-left: auto; }
.demo-actions button { display: flex; align-items: center; justify-content: center; gap: 7px; height: 40px; padding: 0 17px; border-radius: 10px; font-weight: 600; }
.demo-actions .white { background: #fff; color: #0b5a36; }
.demo-actions .tall { height: 44px; padding: 0 21px; }
.demo-actions .glass { height: 44px; background: #2a8d4b; }
.demo-actions .more { width: 120px; gap: 10px; padding: 0; font-weight: 700; }
.demo-actions .square { width: 44px; padding: 0; }
.wgreen { color: #22c55e; }
.flip { transform: rotate(180deg); }

.float-tab { position: fixed; right: 0; top: 467px; width: 44px; height: 66px; border-radius: 12px 0 0 12px; background: #5f7f76; }

/* Dialog */
.overlay { position: fixed; inset: 0; display: flex; align-items: center; justify-content: center; padding: 32px; background: rgba(0, 0, 0, .85); }
.modal { width: 100%; max-width: 512px; border: 2px solid #ef4444; border-radius: 24px; background: #fff; box-shadow: 0 16px 40px rgba(0, 0, 0, .5); }
.modal-head { display: flex; align-items: center; padding: 20px 28px; border-radius: 22px 22px 0 0; color: #fff; background: linear-gradient(135deg, #ef4444, #b91c1c); box-shadow: inset 0 1px 0 rgba(255, 255, 255, .25); }
.modal-icon { width: 36px; height: 36px; display: grid; place-items: center; border: 1px solid rgba(255, 255, 255, .5); border-radius: 8px; background: rgba(255, 255, 255, .32); }
.modal-icon svg, .head-btn svg, .submit svg { filter: drop-shadow(0 1px 2px rgba(0, 0, 0, .35)); }
.modal-head h2 { flex: 1; margin-left: 10px; font: 600 18px/28px Poppins, Inter, sans-serif; }
.head-btn { width: 44px; height: 44px; display: grid; place-items: center; margin-left: 8px; border-radius: 8px; background: rgba(255, 255, 255, .1); }
.head-btn.bright { background: rgba(255, 255, 255, .35); }
.modal-body { padding: 28px; }
.lead { display: flex; align-items: center; gap: 4px; color: #dc2626; }
.lead svg { color: #111827; }
.marked { position: relative; }
.first { margin-top: 16px; }
.second { margin: 16px 0 10px; padding: 5px 0 10px; }
.alert { display: flex; color: #dc2626; border: 1px solid transparent; }
.danger { gap: 12px; padding: 16px 17px; border-radius: 12px; background: #fdebe9; }
.danger svg { color: #1f0f0f; }
.danger h3 { margin-bottom: 4px; font: 600 14px/24px Poppins, Inter, sans-serif; color: #b91c1c; }
.neutral { gap: 13px; padding: 12px; border-color: #c3c9ea; border-radius: 12px; background: #efeef6; color: #374151; }
.neutral b { color: #1f2937; }
.neutral svg { color: #4b5563; }
.marker { position: absolute; inset: 0 -1px -1px 0; border: 5px solid #f4561c; border-radius: 12px; background: rgba(244, 86, 28, .12); background-clip: padding-box; pointer-events: none; }
.second .marker { bottom: 0; }
.third .marker { top: 1px; bottom: 0; }
.step { position: absolute; top: -31px; width: 53px; height: 53px; border: 4px solid #fff; border-radius: 50%; background: #f4561c; color: #fff; font: 700 30px/45px Roboto, "Liberation Sans", sans-serif; text-align: center; }
.step.start { left: -31px; }
.step.end { right: -31px; }
.box { display: flex; gap: 12px; padding: 16px; margin-bottom: 16px; border: 1px solid; border-radius: 24px; }
.avatar { flex: none; width: 40px; height: 40px; display: grid; place-items: center; border-radius: 50%; color: #fff; }
.box-main { flex: 1; min-width: 0; }
.box h4 { font-size: 12px; line-height: 16px; font-weight: 500; letter-spacing: .3px; }
.box strong { display: block; font-weight: 600; color: #1f2937; }
.blue { background: #eff6ff; border-color: #bfdbfe; }
.blue .avatar { background: #3b82f6; }
.blue h4 { color: #2563eb; }
.box .client { font-size: 16px; line-height: 24px; }
.document { margin: 8px 0 0 52px; color: #1f2937; }
.box.green { background: #e8f4f0; border-color: #9fd8c2; }
.green .avatar { background: #1b6b50; }
.green h4 { color: #14543f; }
.green .box-main { padding: 2px 0 4px; }
.line { display: flex; gap: 8px; margin-top: 18px; color: #374151; }
.line span { flex: 1; min-width: 0; overflow: hidden; text-overflow: ellipsis; white-space: nowrap; }
.line b { color: #1f2937; }
.gray { background: #f9fafb; border-color: #e5e7eb; }
.gray .avatar { background: #6b7280; }
.gray h4 { line-height: 40px; color: #1f2937; }
.values { display: grid; grid-template-columns: 1fr 1fr; gap: 12px; margin-top: 12px; color: #6b7280; }
.values div { display: flex; justify-content: space-between; }
.values dd { color: #374151; }
.values .iss { color: #d97706; }
.total { display: flex; align-items: center; gap: 12px; padding: 20px; border-radius: 24px; color: #fff; background: linear-gradient(90deg, #10b981, #0f4a38); }
.total .avatar { width: 48px; height: 48px; background: rgba(255, 255, 255, .2); }
.total-text { flex: 1; font-size: 12px; line-height: 16px; color: #a7f3d0; }
.total h4 { font-size: 12px; font-weight: 600; letter-spacing: .3px; color: #d1fae5; }
.total strong { font-size: 24px; line-height: 32px; font-weight: 700; }
.modal-foot { display: flex; justify-content: flex-end; gap: 12px; padding: 20px 28px; border-top: 1px solid #e2e8f0; }
.cancel, .submit { display: flex; align-items: center; justify-content: center; gap: 14px; height: 48px; border-radius: 8px; }
.cancel { padding: 0 24px; border: 1px solid #e2e8f0; color: #000; font-weight: 500; }
.submit { gap: 13px; padding: 0 24px 0 23px; color: #fff; font-weight: 600; background: linear-gradient(135deg, #ef4444, #b91c1c); box-shadow: 0 4px 10px rgba(0, 0, 0, .2); }
</style>
